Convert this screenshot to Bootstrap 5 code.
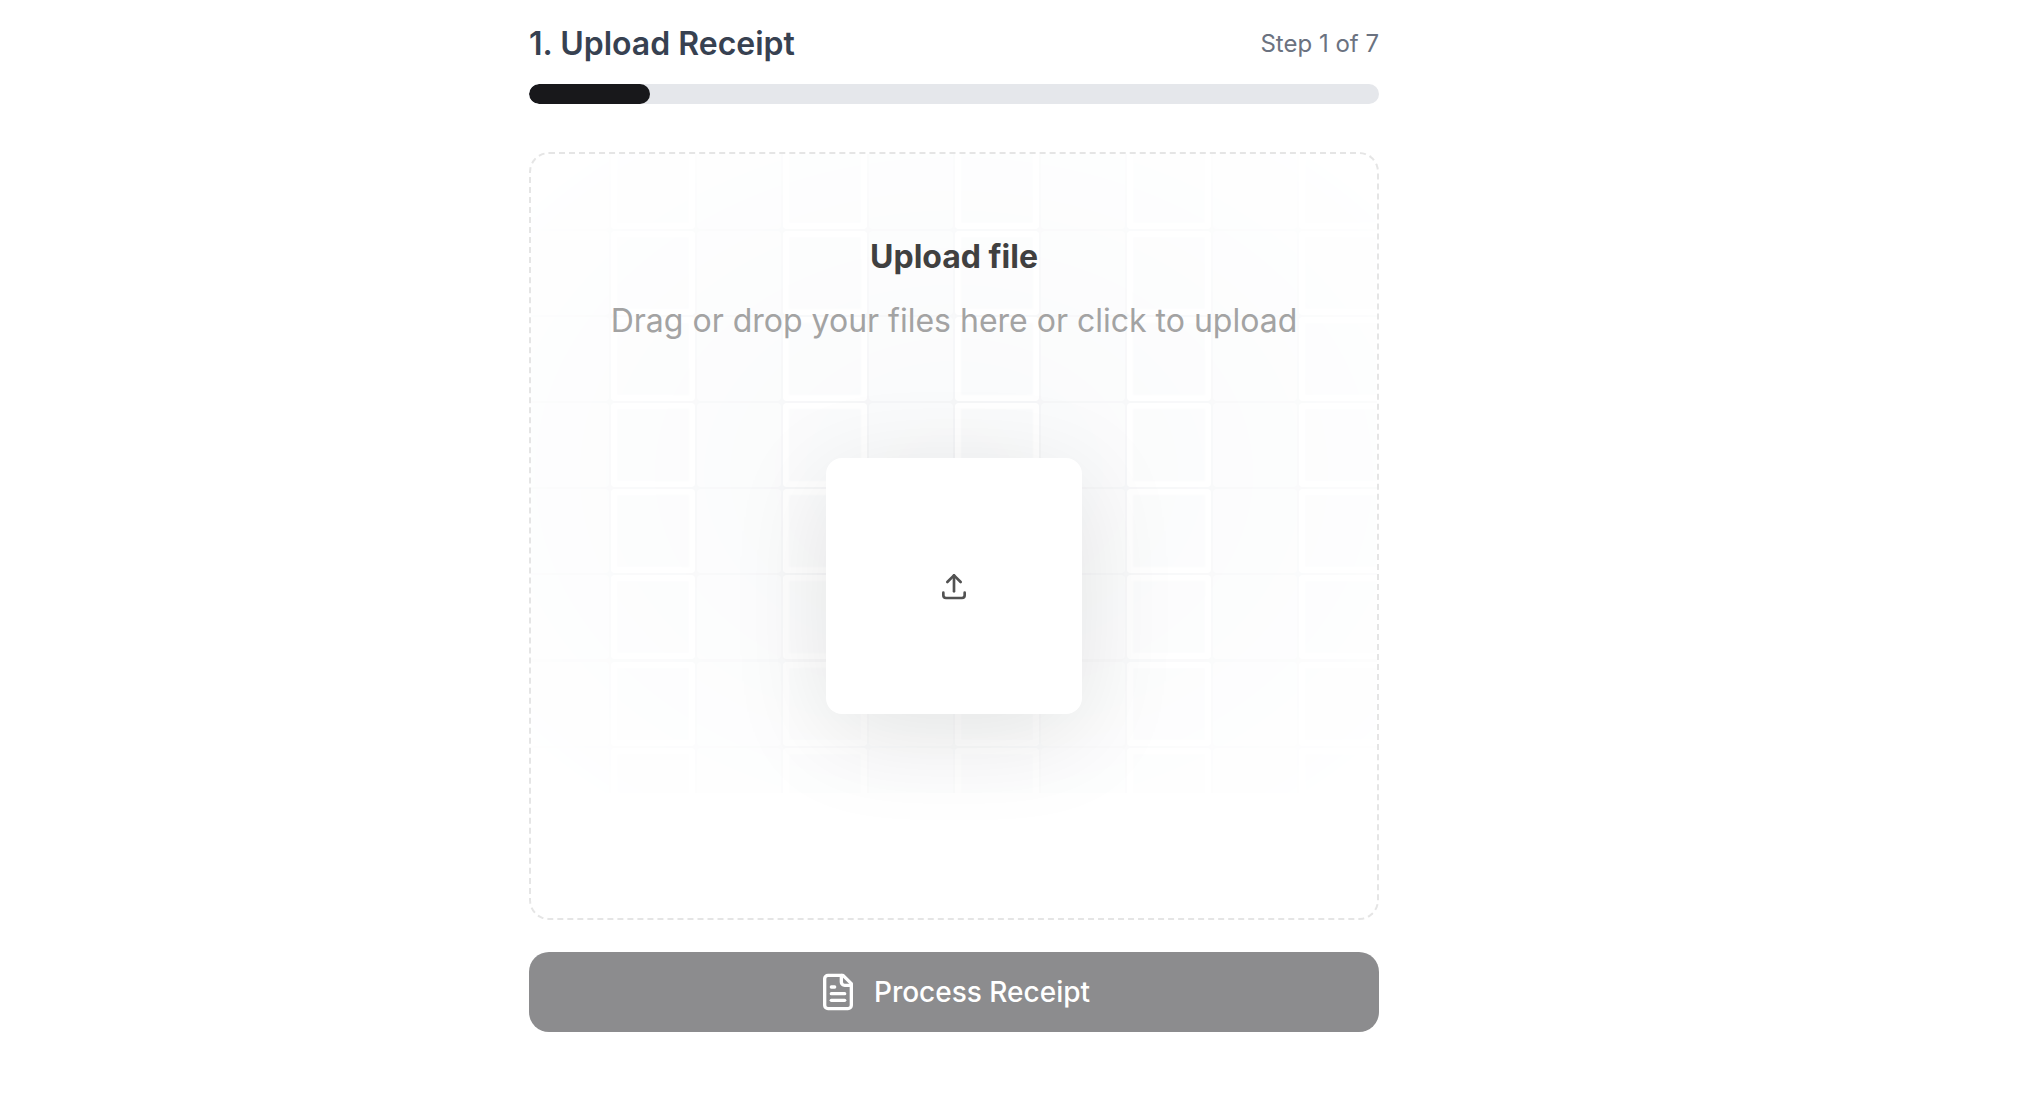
<!DOCTYPE html>
<html lang="en">

<head>
  <meta charset="UTF-8" />
  <meta name="viewport" content="width=device-width, initial-scale=1.0" />
  <title>Upload Receipt</title>
  <link href="https://cdn.jsdelivr.net/npm/bootstrap@5.3.0/dist/css/bootstrap.min.css" rel="stylesheet" />

  <style>
    body {
      background: #fff;
      font-family: "Inter", "Liberation Sans", sans-serif;
    }

    .page-wrap {
      padding-right: 112px;
    }

    .step-column {
      width: 850px;
      padding-top: 22px;
    }

    .step-head {
      height: 44px;
      margin-bottom: 18px;
    }

    .step-title {
      font-size: 32px;
      font-weight: 600;
      line-height: 44px;
      color: #374151;
      margin: 0;
    }

    .step-count {
      font-size: 24px;
      line-height: 44px;
      color: #6b7280;
    }

    .step-progress {
      height: 20px;
      background: #e5e7eb;
      border-radius: 10px;
      margin-bottom: 48px;
    }

    .step-progress .progress-bar {
      background: #18181b;
      border-radius: 10px;
    }

    .drop-zone {
      position: relative;
      height: 768px;
      border: 2px dashed #e5e5e5;
      border-radius: 20px;
      overflow: hidden;
      margin-bottom: 32px;
    }

    .grid-mask {
      position: absolute;
      top: 0;
      left: 0;
      right: 0;
      height: 639px;
      overflow: hidden;
      background: #fff;
      -webkit-mask-image: radial-gradient(ellipse at center, #fff, transparent);
      mask-image: radial-gradient(ellipse at center, #fff, transparent);
    }

    .grid-cells {
      display: grid;
      grid-template-columns: repeat(10, 84px);
      grid-auto-rows: 84px;
      gap: 2.1px;
      justify-content: center;
      margin-top: -9px;
      background: #f3f4f6;
    }

    .grid-cell {
      background: #f9fafb;
      border-radius: 4px;
    }

    .grid-cell.inset {
      box-shadow: inset 0 0 2px 6px #fff;
    }

    .drop-content {
      position: relative;
      padding-top: 83px;
    }

    .drop-title {
      font-size: 32px;
      font-weight: 700;
      line-height: 40px;
      color: #404040;
      margin: 0 0 24px;
    }

    .drop-sub {
      font-size: 32px;
      line-height: 40px;
      color: #a3a3a3;
      margin: 0 0 117px;
    }

    .upload-tile {
      width: 256px;
      height: 256px;
      background: #fff;
      border-radius: 16px;
      box-shadow: 0 20px 100px rgba(0, 0, 0, 0.1);
      color: #525252;
    }

    .process-btn {
      height: 80px;
      border: 0;
      border-radius: 20px;
      font-size: 28px;
      font-weight: 500;
      color: #fff;
      background: #8c8c8e;
      gap: 16px;
    }

    .process-btn:disabled {
      background: #8c8c8e;
      color: #fff;
      opacity: 1;
    }
  </style>
</head>

<body>
  <div class="page-wrap d-flex justify-content-center">
    <div class="step-column">

      <!-- Step header -->
      <div class="step-head d-flex justify-content-between align-items-center">
        <h1 class="step-title">1. Upload Receipt</h1>
        <span class="step-count">Step 1 of 7</span>
      </div>

      <div class="progress step-progress">
        <div class="progress-bar" style="width: 14.2857%"></div>
      </div>

      <!-- Upload area -->
      <div class="drop-zone">
        <div class="grid-mask">
          <div class="grid-cells" id="gridCells"></div>
        </div>

        <div class="drop-content d-flex flex-column align-items-center text-center">
          <p class="drop-title">Upload file</p>
          <p class="drop-sub">Drag or drop your files here or click to upload</p>
          <div class="upload-tile d-flex align-items-center justify-content-center">
            <svg width="32" height="32" viewBox="0 0 24 24" fill="none" stroke="currentColor" stroke-width="2" stroke-linecap="round" stroke-linejoin="round">
              <path d="M4 17v2a2 2 0 0 0 2 2h12a2 2 0 0 0 2 -2v-2" />
              <path d="M7 9l5 -5l5 5" />
              <path d="M12 4l0 12" />
            </svg>
          </div>
        </div>
      </div>

      <button class="btn process-btn w-100 d-flex align-items-center justify-content-center" disabled>
        <svg width="40" height="40" viewBox="0 0 24 24" fill="none" stroke="currentColor" stroke-width="2" stroke-linecap="round" stroke-linejoin="round">
          <path d="M15 2H6a2 2 0 0 0-2 2v16a2 2 0 0 0 2 2h12a2 2 0 0 0 2-2V7Z" />
          <path d="M14 2v4a2 2 0 0 0 2 2h4" />
          <path d="M10 9H8" />
          <path d="M16 13H8" />
          <path d="M16 17H8" />
        </svg>
        Process Receipt
      </button>
    </div>
  </div>

  <script src="https://cdn.jsdelivr.net/npm/bootstrap@5.3.0/dist/js/bootstrap.bundle.min.js"></script>

  <script>
    const gridCells = document.getElementById("gridCells");
    for (let i = 0; i < 80; i++) {
      const cell = document.createElement("div");
      cell.className = i % 2 === 0 ? "grid-cell" : "grid-cell inset";
      gridCells.appendChild(cell);
    }
  </script>
</body>

</html>
